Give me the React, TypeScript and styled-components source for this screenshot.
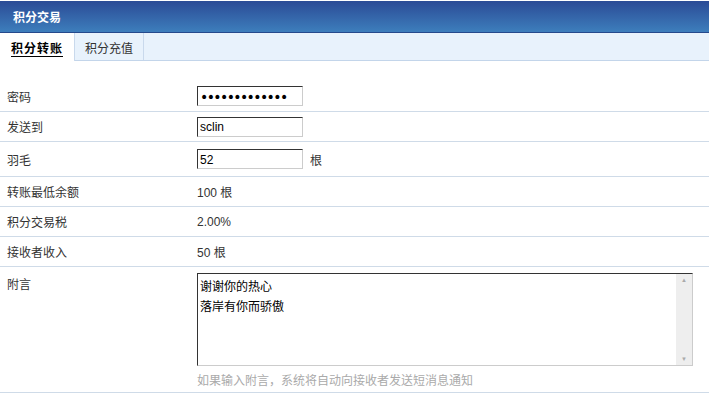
import React from 'react'
import styled, { createGlobalStyle } from 'styled-components'

const Global = createGlobalStyle`
  body {
    margin: 0;
    background: #fff;
    font-family: "Liberation Sans", "Noto Sans CJK SC", sans-serif;
    font-size: 12px;
    color: #333;
  }
`

const rows = [
  { label: '转账最低余额', value: '100 根' },
  { label: '积分交易税', value: '2.00%' },
  { label: '接收者收入', value: '50 根' },
]

const App = () => {
  return (
    <Page>
      <Global />
      <Header>积分交易</Header>
      <TabBar>
        <Tab $active>
          <TabText $active>积分转账</TabText>
        </Tab>
        <Tab>
          <TabText>积分充值</TabText>
        </Tab>
      </TabBar>
      <Form>
        <Row $height={50} $top={20}>
          <Label>密码</Label>
          <Value>
            <Input type="password" $secret readOnly value="1234567890123" />
          </Value>
        </Row>
        <Row $height={29}>
          <Label>发送到</Label>
          <Value>
            <Input readOnly value="sclin" />
          </Value>
        </Row>
        <Row $height={34}>
          <Label>羽毛</Label>
          <Value>
            <Input readOnly value="52" />
            <Unit>根</Unit>
          </Value>
        </Row>
        {rows.map((r) => (
          <Row key={r.label} $height={29}>
            <Label>{r.label}</Label>
            <Value>{r.value}</Value>
          </Row>
        ))}
        <MessageRow>
          <Label>附言</Label>
          <div>
            <AreaBox>
              <Area readOnly value={'谢谢你的热心\n落岸有你而骄傲'} />
              <ScrollBar>
                <Arrow>▲</Arrow>
                <Arrow>▼</Arrow>
              </ScrollBar>
            </AreaBox>
            <Hint>如果输入附言，系统将自动向接收者发送短消息通知</Hint>
          </div>
        </MessageRow>
      </Form>
    </Page>
  )
}

export default App

const Page = styled.div`
  width: 709px;
  padding-top: 1px;
`
const Header = styled.div`
  height: 31px;
  line-height: 31px;
  padding-left: 13px;
  background: linear-gradient(#2b4b96, #3d7ebc);
  border-bottom: 1px solid #25498c;
  color: #fff;
  font-weight: bold;
  font-family: "Noto Sans CJK SC", sans-serif;
  font-size: 12px;
`
const TabBar = styled.div`
  display: flex;
  height: 27px;
  background: #e8f2fc;
  border-bottom: 1px solid #c3d5ea;
`
const Tab = styled.div<{ $active?: boolean }>`
  display: flex;
  align-items: center;
  padding: 0 10px;
  width: ${(p) => (p.$active ? 53 : 48)}px;
  background: ${(p) => (p.$active ? '#fff' : 'transparent')};
  border-right: 1px solid #c9d9ec;
  margin-bottom: ${(p) => (p.$active ? '-1px' : '0')};
  padding-left: ${(p) => (p.$active ? 11 : 10)}px;
`
const TabText = styled.span<{ $active?: boolean }>`
  font-family: "Noto Sans CJK SC", sans-serif;
  font-weight: ${(p) => (p.$active ? 'bold' : 'normal')};
  color: ${(p) => (p.$active ? '#000' : '#333')};
  border-bottom: ${(p) => (p.$active ? '1px solid #000' : 'none')};
  letter-spacing: ${(p) => (p.$active ? '1px' : '0')};
  line-height: 16px;
  margin-top: 3px;
`
const Form = styled.div``
const Row = styled.div<{ $height: number; $top?: number }>`
  display: grid;
  grid-template-columns: 190px 1fr;
  align-items: center;
  box-sizing: content-box;
  height: ${(p) => p.$height - (p.$top ?? 0)}px;
  padding: ${(p) => p.$top ?? 0}px 0 0 7px;
  border-bottom: 1px solid #cfdbe8;
`
const Label = styled.div`
  color: #333;
  font-family: "Noto Sans CJK SC", sans-serif;
`
const Value = styled.div`
  display: flex;
  align-items: center;
  color: #333;
  font-family: "Liberation Sans", "Noto Sans CJK SC", sans-serif;
`
const Input = styled.input<{ $secret?: boolean }>`
  box-sizing: border-box;
  width: 106px;
  height: 20px;
  margin: 0;
  padding: 1px 2px 0;
  border: 1px solid #ccc;
  border-top-color: #333;
  border-left-color: #333;
  font: ${(p) => (p.$secret ? '14px "DejaVu Sans"' : '12px "Liberation Sans"')}, sans-serif;
  letter-spacing: ${(p) => (p.$secret ? '-1.6px' : '0')};
  color: #000;
  outline: none;
`
const Unit = styled.span`
  margin-left: 7px;
  font-family: "Noto Sans CJK SC", sans-serif;
`
const MessageRow = styled.div`
  display: grid;
  grid-template-columns: 190px 1fr;
  align-items: start;
  height: 119px;
  padding: 6px 0 0 7px;
  border-bottom: 1px solid #cfdbe8;
  & > ${Label} {
    margin-top: 2px;
  }
`
const AreaBox = styled.div`
  display: flex;
  width: 496px;
  height: 93px;
  box-sizing: border-box;
  border: 1px solid #ccc;
  border-top-color: #333;
  border-left-color: #333;
`
const Area = styled.textarea`
  flex: 1;
  border: none;
  margin: 0;
  padding: 2px 2px;
  resize: none;
  overflow: hidden;
  outline: none;
  font: 12px/20px "Noto Sans CJK SC", sans-serif;
  color: #000;
`
const ScrollBar = styled.div`
  width: 16px;
  background: #eee;
  display: flex;
  flex-direction: column;
  justify-content: space-between;
  align-items: center;
  padding: 2px 0;
`
const Arrow = styled.span`
  font-size: 6px;
  color: #aaa;
  line-height: 8px;
`
const Hint = styled.div`
  margin-top: 5px;
  color: #aaa;
  font-family: "Noto Sans CJK SC", sans-serif;
`
